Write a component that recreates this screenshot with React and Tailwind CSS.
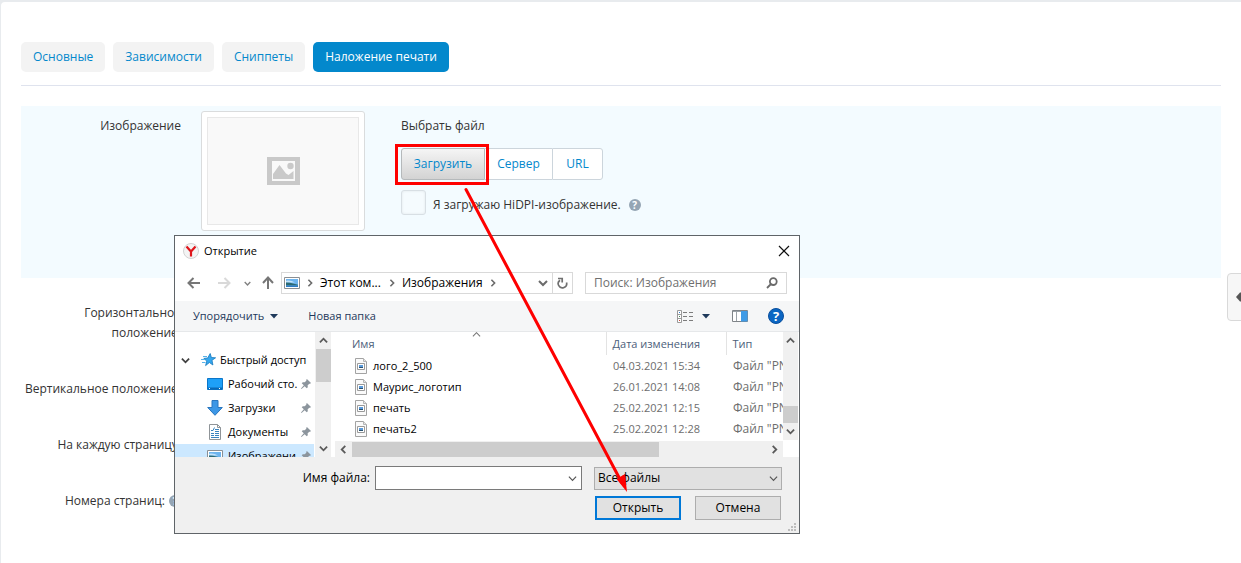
import React from "react";

function Chevron({ dir = "right", size = 9, color = "#5a5a5a", width = 2 }) {
  const d = {
    right: "M3 1l4 4-4 4",
    left: "M7 1L3 5l4 4",
    down: "M1 3l4 4 4-4",
    up: "M1 7l4-4 4 4",
  }[dir];
  return (
    <svg width={size} height={size} viewBox="0 0 10 10" fill="none" stroke={color} strokeWidth={width} aria-hidden="true" className="shrink-0">
      <path d={d} />
    </svg>
  );
}

function HelpMark() {
  return (
    <span className="flex h-3 w-3 shrink-0 items-center justify-center rounded-full bg-[#95a5b4] text-[10px] leading-3 font-bold text-white">
      ?
    </span>
  );
}

const tabs = ["Основные", "Зависимости", "Сниппеты", "Наложение печати"];

function Tabs() {
  return (
    <nav className="flex gap-2 border-b border-[#dfe3ee] pb-[13px]">
      {tabs.map((t, i) => (
        <a
          key={t}
          href="#"
          className={
            i === 3
              ? "rounded-[5px] bg-[#0388cc] px-3 py-[5px] text-white"
              : "rounded-[5px] bg-[#f3f3f3] px-3 py-[5px] text-[#0388cc]"
          }
        >
          {t}
        </a>
      ))}
    </nav>
  );
}

function ImagePlaceholder() {
  return (
    <div className="h-[120px] w-[164px] shrink-0 rounded-[3px] border border-[#dadcdd] bg-white p-[5px]">
      <div className="flex h-full items-center justify-center border border-[#e8e8e8] bg-[#f9f9f9]">
        <svg width="33" height="28" viewBox="0 0 33 28" aria-hidden="true">
          <path fill="#c9c9c9" fillRule="evenodd" d="M0 0h33v28H0zM5 4v20h23V4z" />
          <path fill="#c9c9c9" d="M6 22v-5l6.500-9 6.500 8.500 2.500 1.500 5-4v8z" />
          <circle cx="23.500" cy="9" r="3.200" fill="#c9c9c9" />
        </svg>
      </div>
    </div>
  );
}

function ImageField() {
  return (
    <section className="mt-5 flex h-[172px] bg-[#f3fbff] pt-[5px]">
      <div className="w-40 shrink-0 pt-[5px] text-right">Изображение</div>
      <div className="ml-5">
        <ImagePlaceholder />
      </div>
      <div className="ml-9 pt-[5px]">
        <div>Выбрать файл</div>
        <div className="relative mt-3 flex h-8 w-max">
          <button className="w-[84px] rounded-l-[3px] border border-[#b5b9bb] bg-linear-to-b from-[#f5f5f5] to-[#d3d3d3] text-[#0388cc]">
            Загрузить
          </button>
          <button className="w-[67px] border-y border-[#ccd5dc] bg-white text-[#0388cc]">Сервер</button>
          <button className="w-[51px] rounded-r-[3px] border border-[#ccd5dc] bg-white text-[#0388cc]">URL</button>
          <div className="pointer-events-none absolute -top-1 -left-[6px] h-[41px] w-[94px] border-3 border-[#fe0000]" />
        </div>
        <div className="mt-[10px] flex items-center">
          <input
            id="hidpi"
            type="checkbox"
            className="h-[25px] w-[25px] appearance-none rounded-[3px] border border-[#d8dfe4] bg-[#f5fbfe] shadow-[inset_0_0_3px_rgba(0,0,0,0.08)]"
          />
          <label htmlFor="hidpi" className="ml-[7px] pt-1">Я загружаю HiDPI-изображение.</label>
          <span className="ml-2 pt-1"><HelpMark /></span>
        </div>
      </div>
    </section>
  );
}

function TitleBar() {
  return (
    <div className="flex h-[30px] items-center pr-[9px] pl-2">
      <svg width="16" height="16" viewBox="0 0 16 16" aria-hidden="true">
        <circle cx="8" cy="8" r="7.500" fill="#f4f4f4" stroke="#d2d2d2" />
        <path d="M3.500 3.500L8 8.500l4.500-5M8 8v5.500" fill="none" stroke="#e0161c" strokeWidth="2.200" />
      </svg>
      <h2 className="ml-[5px] text-[11px]">Открытие</h2>
      <button aria-label="Закрыть" className="ml-auto">
        <svg width="12" height="12" viewBox="0 0 12 12" stroke="#111" strokeWidth="1.200" aria-hidden="true">
          <path d="M1 1l10 10M11 1L1 11" />
        </svg>
      </button>
    </div>
  );
}

function PictureIcon() {
  return (
    <svg width="16" height="12" viewBox="0 0 16 12" className="shrink-0" aria-hidden="true">
      <path fill="#fff" stroke="#8b8f93" d="M.5.5h15v11H.5z" />
      <path fill="#6db4ee" d="M2 2h12v8H2z" />
      <path fill="#c4e3f9" d="M2 4c3-1 6 0 9 1.500H2z" />
      <path fill="#2d6a72" d="M2 5.500l4 .2 8 2V8.500H2z" />
      <path fill="#2f7cc4" d="M2 8.500h12V10H2z" />
    </svg>
  );
}

function AddressRow() {
  return (
    <div className="mt-[6px] flex h-[22px] items-center">
      <button aria-label="Назад" className="ml-3">
        <svg width="14" height="12" viewBox="0 0 14 12" fill="none" stroke="#767676" strokeWidth="2" aria-hidden="true">
          <path d="M13 6H2M6.500 1L1.500 6l5 5" />
        </svg>
      </button>
      <button aria-label="Вперёд" className="ml-4">
        <svg width="14" height="12" viewBox="0 0 14 12" fill="none" stroke="#d9d9d9" strokeWidth="2" aria-hidden="true">
          <path d="M1 6h11M7.500 1l5 5-5 5" />
        </svg>
      </button>
      <button aria-label="Недавние" className="ml-[13px]">
        <Chevron dir="down" size={7} color="#808080" />
      </button>
      <button aria-label="Вверх" className="ml-[11px]">
        <svg width="12" height="14" viewBox="0 0 12 14" fill="none" stroke="#767676" strokeWidth="2" aria-hidden="true">
          <path d="M6 13V2M1 7l5-5.500L11 7" />
        </svg>
      </button>
      <div className="ml-[7px] flex h-[22px] min-w-0 flex-1 items-center border border-[#d9d9d9] pl-[2px]">
        <PictureIcon />
        <span className="ml-[6px]"><Chevron size={8} color="#6b6b6b" /></span>
        <span className="ml-[6px]">Этот ком...</span>
        <span className="ml-[7px]"><Chevron size={8} color="#6b6b6b" /></span>
        <span className="ml-[6px]">Изображения</span>
        <span className="ml-[6px]"><Chevron size={8} color="#6b6b6b" /></span>
        <button aria-label="Список адресов" className="ml-auto px-1">
          <Chevron dir="down" size={10} color="#6b6b6b" />
        </button>
        <button aria-label="Обновить" className="flex h-full w-5 items-center justify-center border-l border-[#d9d9d9]">
          <svg width="11" height="12" viewBox="0 0 11 12" fill="none" stroke="#707070" strokeWidth="1.700" aria-hidden="true">
            <path d="M3 3.200a4.200 4.200 0 1 0 6.500 2.300M1 1.500h4.200v4" />
          </svg>
        </button>
      </div>
      <div className="mr-3 ml-3 flex h-[22px] w-[202px] items-center border border-[#d9d9d9] pr-2">
        <input aria-label="Поиск" placeholder="Поиск: Изображения" className="min-w-0 flex-1 bg-transparent pl-2 outline-none placeholder:text-[#6f6f6f]" />
        <svg width="12" height="12" viewBox="0 0 12 12" fill="none" stroke="#6a6a6a" strokeWidth="1.800" aria-hidden="true">
          <circle cx="7.300" cy="4.600" r="3.400" />
          <path d="M5 7L1 11" />
        </svg>
      </div>
    </div>
  );
}

function Toolbar() {
  return (
    <div className="mt-[7px] flex h-[31px] items-center border-b border-[#e6e8ea] bg-[#f5f6f7] pr-[15px] pl-[18px] text-[11px] text-[#1e395b]">
      <button className="flex items-center gap-[6px]">
        Упорядочить
        <svg width="8" height="5" viewBox="0 0 8 5" fill="#1e395b" aria-hidden="true"><path d="M0 0h8L4 4.500z" /></svg>
      </button>
      <button className="ml-[30px]">Новая папка</button>
      <button aria-label="Вид" className="ml-auto flex items-center gap-[9px]">
        <svg width="16" height="13" viewBox="0 0 16 13" aria-hidden="true">
          <path d="M.5.5h4v12h-4zM.5 4.500h4M.5 8.500h4" fill="#fff" stroke="#9a9a9a" />
          <path d="M6 2.500h4M12 2.500h4M6 6.500h4M12 6.500h4M6 10.500h4M12 10.500h4" stroke="#7c7c7c" />
          <path d="M2 2h1v1H2z" fill="#2d7bd1" /><path d="M2 6h1v1H2z" fill="#4a8f5a" /><path d="M2 10h1v1H2z" fill="#d04a3a" />
        </svg>
        <svg width="8" height="5" viewBox="0 0 8 5" fill="#1e395b" aria-hidden="true"><path d="M0 0h8L4 4.500z" /></svg>
      </button>
      <button aria-label="Область просмотра" className="ml-[22px]">
        <svg width="16" height="12" viewBox="0 0 16 12" aria-hidden="true">
          <path d="M.5.500h15v11H.5z" fill="#fff" stroke="#7f8488" />
          <path d="M1 1h14v1H1z" fill="#9ba2a8" /><path d="M4.500 2v9" stroke="#9ba2a8" />
          <path d="M9 1h6.500v10.500H9z" fill="#3f9be6" />
        </svg>
      </button>
      <button aria-label="Справка" className="ml-5 flex h-4 w-4 items-center justify-center rounded-full border border-[#0a4f9d] bg-[#0b66c3] text-[13px] leading-4 font-bold text-white">
        ?
      </button>
    </div>
  );
}

function StarIcon() {
  return (
    <svg width="15" height="14" viewBox="0 0 15 14" className="shrink-0" aria-hidden="true">
      <path d="M9.200.5l1.200 4 4.200.3-3.600 2.500.9 4.700L8.400 9.500 4.600 12.600l1.200-4.500-3-2.700 3.900-.4z" fill="#35a7ee" stroke="#1477bd" strokeWidth=".8" />
      <path d="M2 3.500h4M0 6.500h4M1 9.500h3.500" stroke="#58b3ea" />
    </svg>
  );
}

function DesktopIcon() {
  return (
    <svg width="16" height="12" viewBox="0 0 16 12" className="shrink-0" aria-hidden="true">
      <path d="M.5.500h15v11H.5z" fill="#1ea0f8" stroke="#0b76c9" />
      <path d="M1 9.500h14v2H1z" fill="#0a69b6" /><path d="M2 10.500h1M12 10.500h1" stroke="#fff" />
    </svg>
  );
}

function DownloadIcon() {
  return (
    <svg width="16" height="16" viewBox="0 0 16 16" className="shrink-0" aria-hidden="true">
      <path d="M5 .5h6v7h4.300L8 15.300.7 7.500H5z" fill="#3d97e6" stroke="#2a76bf" />
    </svg>
  );
}

function DocumentIcon() {
  return (
    <svg width="16" height="16" viewBox="0 0 16 16" className="shrink-0" aria-hidden="true">
      <path d="M2.500.5h8l3 3v12h-11z" fill="#fff" stroke="#8f9498" />
      <path d="M10.500.5v3h3" fill="none" stroke="#8f9498" />
      <path d="M4 6.500h2l1.500-3M8 5.500h4M8 7.500h4M4 9.500h3M8 9.500h4M4 11.500h3M8 11.500h4M4 13.500h8" stroke="#3a84bf" fill="none" />
    </svg>
  );
}

function PinIcon() {
  return (
    <svg width="10" height="10" viewBox="0 0 11 11" fill="#8c959d" aria-hidden="true">
      <path d="M6.500 0L11 4.500l-1 .8-.8-.2L7.300 7l.2 2-1.200 1.200L4 7.900.6 11 0 10.400 3.100 7 .8 4.700 2 3.500l2 .2 1.900-1.900L5.700 1z" />
    </svg>
  );
}

const places = [
  { name: "Рабочий сто.", icon: <DesktopIcon /> },
  { name: "Загрузки", icon: <DownloadIcon /> },
  { name: "Документы", icon: <DocumentIcon /> },
  { name: "Изображени", icon: <PictureIcon />, selected: true },
];

function PlacesTree() {
  return (
    <div className="flex w-[156px] shrink-0">
      <div className="h-[125px] w-[139px] overflow-hidden pt-4 text-[11px]">
        <div className="flex h-6 items-center pl-[6px] whitespace-nowrap">
          <Chevron dir="down" size={9} color="#404040" />
          <span className="ml-[11px]"><StarIcon /></span>
          <span className="ml-[4px]">Быстрый доступ</span>
        </div>
        <ul>
          {places.map((p) => (
            <li
              key={p.name}
              className={
                p.selected
                  ? "flex h-6 items-center bg-[#cce8ff] pr-[3px] pl-8"
                  : "flex h-6 items-center pr-[3px] pl-8"
              }
            >
              {p.icon}
              <span className="ml-[5px] whitespace-nowrap">{p.name}</span>
              <span className="ml-auto"><PinIcon /></span>
            </li>
          ))}
        </ul>
      </div>
      <div className="ml-[1px] flex w-4 flex-col items-center bg-[#f0f0f0]">
        <span className="flex h-[17px] items-center"><Chevron dir="up" /></span>
        <span className="h-[33px] w-[15px] bg-[#cdcdcd]" />
        <span className="mt-auto flex h-[17px] items-center"><Chevron dir="down" /></span>
      </div>
    </div>
  );
}

const files = [
  ["лого_2_500", "04.03.2021 15:34"],
  ["Маурис_логотип", "26.01.2021 14:08"],
  ["печать", "25.02.2021 12:15"],
  ["печать2", "25.02.2021 12:28"],
];

function FileIcon() {
  return (
    <svg width="12" height="16" viewBox="0 0 12 16" className="shrink-0" aria-hidden="true">
      <path d="M.5.5h8l3 3v12H.5z" fill="#fafafa" stroke="#a3a3a3" />
      <path d="M8.500.5v3h3" fill="#e5e5e5" stroke="#b5b5b5" />
      <path d="M2.500 5.500h7v6h-7z" fill="#fff" stroke="#9a9a9a" />
      <path d="M4 7h4v3H4z" fill="#5b9bdc" /><path d="M4 9h4v1H4z" fill="#27506f" />
    </svg>
  );
}

function FileList() {
  return (
    <div className="ml-1 flex min-w-0 flex-1 border-r border-white">
      <div className="flex min-w-0 flex-1 flex-col">
        <div className="h-[109px] overflow-hidden">
          <table className="w-full table-fixed border-collapse text-left text-[11px] whitespace-nowrap">
            <thead>
              <tr className="h-[23px] text-[#4c607a]">
                <th className="relative p-0 pl-[17px] font-normal">
                  Имя
                  <span className="absolute -top-[2px] left-[137px]"><Chevron dir="up" size={9} color="#777" width={1.200} /></span>
                </th>
                <th className="w-[120px] border-l border-[#e3e3e3] p-0 pl-[6px] font-normal">Дата изменения</th>
                <th className="w-[57px] border-l border-[#e3e3e3] p-0 pl-[6px] font-normal">Тип</th>
              </tr>
            </thead>
            <tbody>
              {files.map(([name, date]) => (
                <tr key={name} className="h-[21px] text-[#6d6d6d]">
                  <td className="p-0 pl-5 text-black">
                    <span className="flex items-center gap-[6px]"><FileIcon />{name}</span>
                  </td>
                  <td className="p-0 pl-[7px]">{date}</td>
                  <td className="overflow-hidden p-0 pl-[7px] text-[12px]">Файл "PNG"</td>
                </tr>
              ))}
            </tbody>
          </table>
        </div>
        <div className="flex h-4 items-center bg-[#f0f0f0]">
          <span className="flex w-[17px] justify-center"><Chevron dir="left" /></span>
          <span className="h-[15px] w-[307px] bg-[#cdcdcd]" />
          <span className="mr-1 ml-auto"><Chevron /></span>
        </div>
      </div>
      <div className="mb-[17px] flex w-[15px] flex-col items-center bg-[#f0f0f0]">
        <span className="flex h-[17px] items-center"><Chevron dir="up" /></span>
        <span className="mt-auto h-[17px] w-full bg-[#cdcdcd]" />
        <span className="flex h-[17px] items-center"><Chevron dir="down" /></span>
      </div>
    </div>
  );
}

function DialogFooter() {
  return (
    <div className="relative h-[76px] bg-[#f0f0f0] pt-[9px] pr-[17px]">
      <div className="flex items-center justify-end">
        <label htmlFor="filename" className="mr-[5px]">Имя файла:</label>
        <div className="flex h-6 w-[207px] items-center border border-[#7a7a7a] bg-white pr-1">
          <input id="filename" className="min-w-0 flex-1 bg-transparent px-1 outline-none" />
          <Chevron dir="down" size={9} color="#555" width={1.300} />
        </div>
        <div className="relative ml-3">
          <select aria-label="Тип файлов" className="block h-[23px] w-[188px] appearance-none border border-[#adadad] bg-[#e1e1e1] px-[3px] leading-4">
            <option>Все файлы</option>
          </select>
          <span className="pointer-events-none absolute top-[7px] right-1"><Chevron dir="down" size={9} color="#555" width={1.300} /></span>
        </div>
      </div>
      <div className="mt-[6px] flex justify-end gap-[14px] pr-px">
        <button className="h-6 w-[86px] border-2 border-[#0078d7] bg-[#e1e1e1]">Открыть</button>
        <button className="h-6 w-[86px] border border-[#adadad] bg-[#e1e1e1]">Отмена</button>
      </div>
      <svg width="8" height="8" viewBox="0 0 8 8" fill="#bdbdbd" className="absolute right-[3px] bottom-[2px]" aria-hidden="true">
        <path d="M6 0h2v2H6zM3 3h2v2H3zM6 3h2v2H6zM0 6h2v2H0zM3 6h2v2H3zM6 6h2v2H6z" />
      </svg>
    </div>
  );
}

function OpenDialog() {
  return (
    <div
      role="dialog"
      aria-label="Открытие"
      className="absolute top-[235px] left-[174px] w-[626px] border border-[#5f6468] bg-white text-[12px] leading-4 text-black"
    >
      <TitleBar />
      <AddressRow />
      <Toolbar />
      <div className="flex h-[125px]">
        <PlacesTree />
        <FileList />
      </div>
      <DialogFooter />
    </div>
  );
}

export default function App() {
  return (
    <div className="relative min-h-screen overflow-hidden bg-[#e8ebee] pt-[2px] pl-[1px] font-['Open_Sans','Noto_Sans',sans-serif] text-[12px] leading-5 text-[#333]">
      <main className="min-h-[561px] rounded-tl-[4px] bg-white px-5 pt-10">
        <Tabs />
        <ImageField />
        <div className="mt-[25px] flex w-40 flex-col gap-9 text-right">
          <div>Горизонтальное положение:</div>
          <div className="whitespace-nowrap">Вертикальное положение:</div>
          <div>На каждую страницу:</div>
          <div className="flex items-center justify-end gap-1">Номера страниц: <HelpMark /></div>
        </div>
      </main>
      <button aria-label="Открыть панель" className="absolute top-[273px] -right-[3px] flex h-12 w-[17px] items-center justify-end rounded-l-[4px] border border-[#d9d9d9] bg-[#f7f7f7]">
        <svg width="7" height="10" viewBox="0 0 7 10" fill="#555" aria-hidden="true"><path d="M0 5l4-4.500h3v9H4z" /></svg>
      </button>
      <OpenDialog />
      <svg width="180" height="310" viewBox="0 0 180 310" className="pointer-events-none absolute top-[186px] left-[460px]" aria-hidden="true">
        <path d="M6 3.500L162 297" stroke="#fe0000" strokeWidth="3" strokeLinecap="round" />
        <path d="M167 306l-10.500-13 8.500-5z" fill="#fe0000" />
      </svg>
    </div>
  );
}
